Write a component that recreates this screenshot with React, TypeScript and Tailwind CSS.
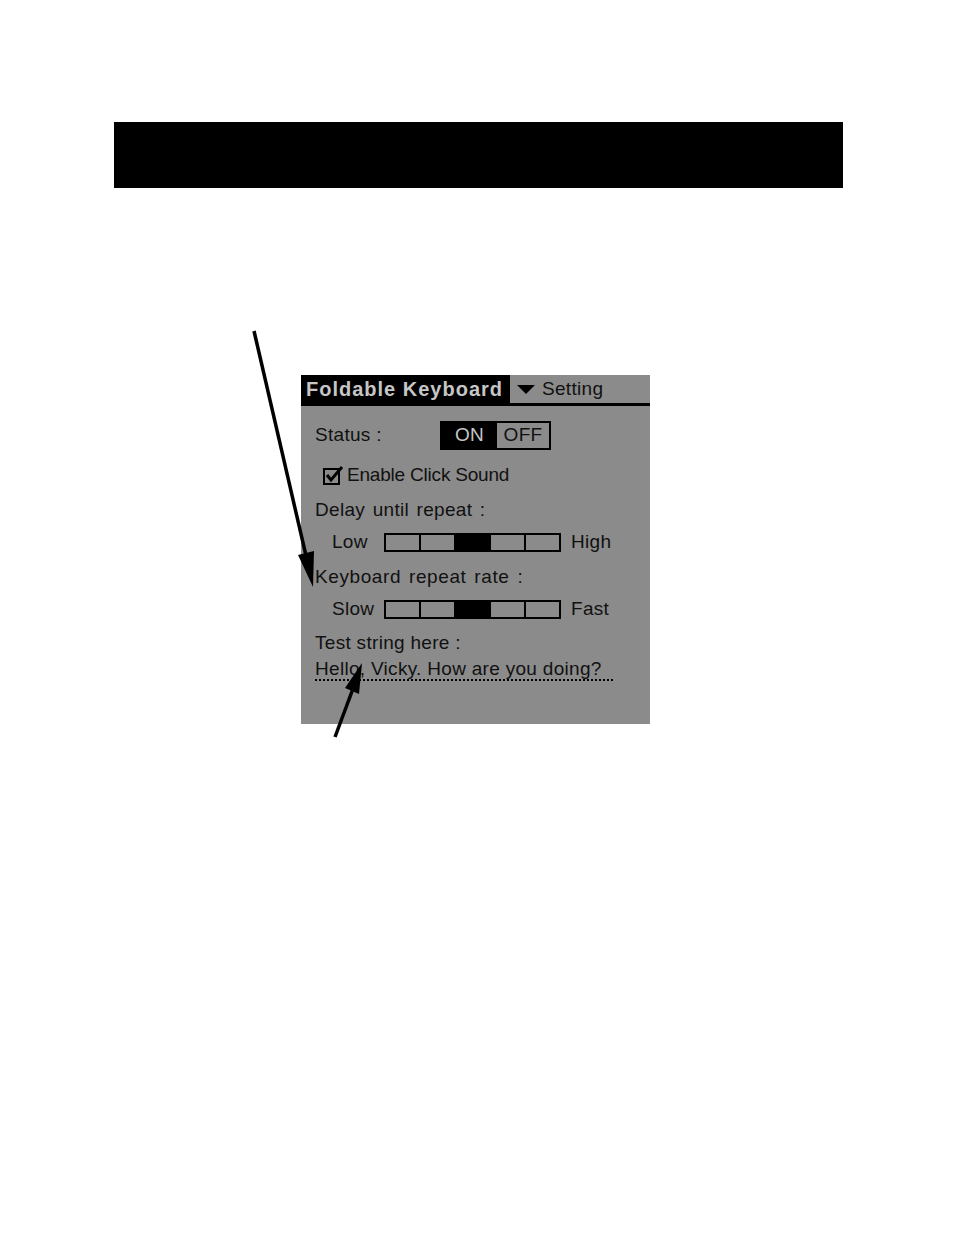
import React from "react";

function Slider() {
  return (
    <div className="flex h-[19px] w-[177px] border-2 border-black">
      <div className="flex-1 border-r-2 border-black" />
      <div className="flex-1 border-r-2 border-black" />
      <div className="flex-1 border-r-2 border-black bg-black" />
      <div className="flex-1 border-r-2 border-black" />
      <div className="flex-1" />
    </div>
  );
}

function Arrows() {
  return (
    <svg
      className="absolute left-0 top-0 pointer-events-none"
      width="954"
      height="1235"
      viewBox="0 0 954 1235"
    >
      <line x1="254" y1="331" x2="307" y2="560" stroke="#000" strokeWidth="3.5" />
      <polygon points="313,587 298,555 314,551" fill="#000" />
      <line x1="335" y1="737" x2="354" y2="686" stroke="#000" strokeWidth="3.5" />
      <polygon points="362,663 359,694 345,688" fill="#000" />
    </svg>
  );
}

export default function App() {
  const font = { fontFamily: '"Liberation Sans", Arial, sans-serif' };
  return (
    <div className="relative min-h-[1235px] w-[954px] bg-white pt-[122px]" style={font}>
      <div className="ml-[114px] h-[66px] w-[729px] bg-black" />

      <div className="ml-[301px] mt-[187px] h-[349px] w-[349px] bg-[#8b8b8b] text-[19px] tracking-[0.3px] text-[#111]">
        {/* title bar */}
        <div className="flex h-[28px] items-center">
          <div className="flex h-full w-[209px] items-center bg-black pl-[5px] text-[20px] font-bold tracking-[1px] text-[#c6c6c6]">
            Foldable Keyboard
          </div>
          <svg width="18" height="9" viewBox="0 0 18 9" className="ml-[7px]">
            <polygon points="0,0 18,0 9,9" fill="#000" />
          </svg>
          <span className="ml-[7px]">Setting</span>
        </div>
        <div className="h-[3px] bg-black" />

        <div className="mt-[13px] flex h-[32px] items-center pl-[14px]">
          <span className="w-[125px]">Status :</span>
          <div className="flex h-[29px] w-[111px] border-2 border-black">
            <div className="flex w-[55px] items-center justify-center bg-black text-[#c6c6c6]">ON</div>
            <div className="flex flex-1 items-center justify-center">OFF</div>
          </div>
        </div>

        <div className="mt-[8px] flex h-[32px] items-center pl-[22px]">
          <svg width="21" height="20" viewBox="0 0 21 20">
            <rect x="1" y="4" width="15" height="15" fill="none" stroke="#000" strokeWidth="2" />
            <path d="M4 10 L8 15 L19 2" fill="none" stroke="#000" strokeWidth="3" />
          </svg>
          <span className="ml-[3px] tracking-[-0.2px]">Enable Click Sound</span>
        </div>

        <div className="mt-[3px] flex h-[32px] items-center pl-[14px] [word-spacing:2px]">Delay until repeat :</div>

        <div className="flex h-[32px] items-center pl-[31px]">
          <span className="w-[52px]">Low</span>
          <Slider />
          <span className="ml-[10px]">High</span>
        </div>

        <div className="mt-[3px] flex h-[32px] items-center pl-[14px] tracking-[0.6px] [word-spacing:2px]">Keyboard repeat rate :</div>

        <div className="flex h-[32px] items-center pl-[31px]">
          <span className="w-[52px]">Slow</span>
          <Slider />
          <span className="ml-[10px]">Fast</span>
        </div>

        <div className="mt-[2px] flex h-[32px] items-center pl-[14px]">Test string here :</div>

        <div className="pl-[14px]">
          <div className="h-[22px] w-[298px] whitespace-nowrap border-b-2 border-dotted border-black leading-[20px]">
            Hello, Vicky. How are you doing?
          </div>
        </div>
      </div>

      <Arrows />
    </div>
  );
}
